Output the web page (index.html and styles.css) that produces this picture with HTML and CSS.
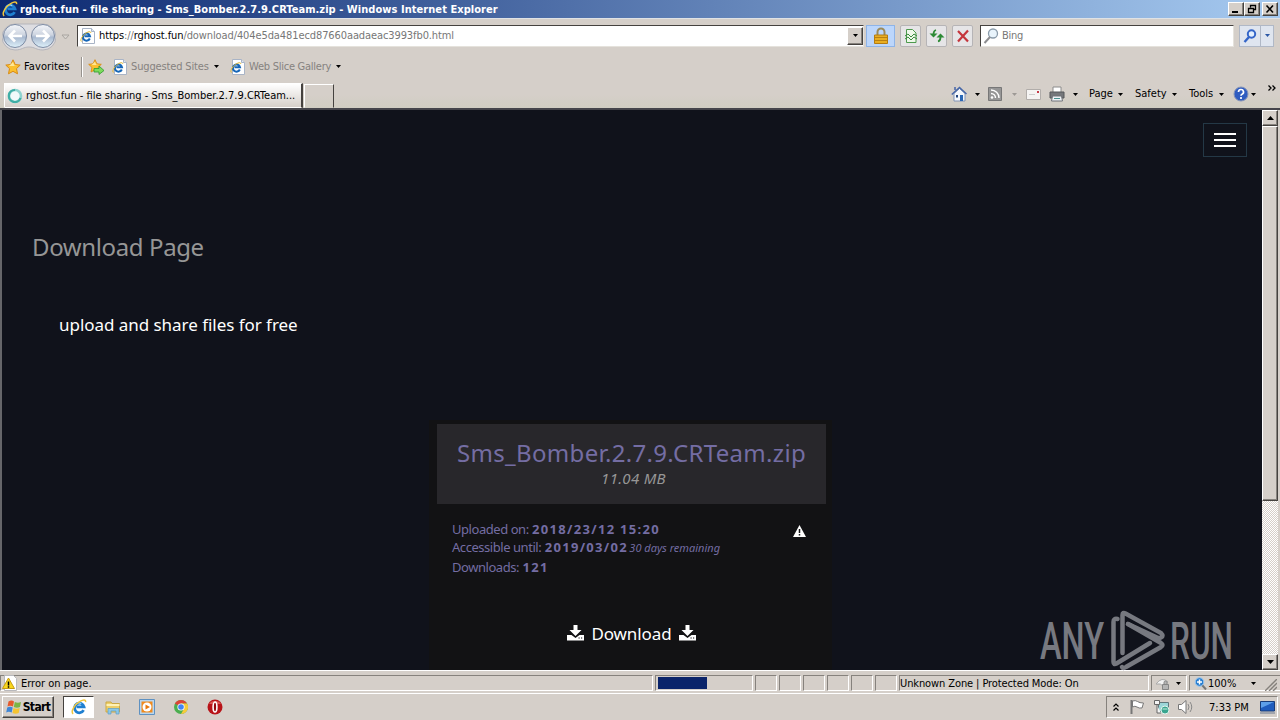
FILE: index.html
```
<!DOCTYPE html>
<html lang="en">
<head>
  <meta charset="UTF-8" />
  <title>rghost.fun - file sharing - Sms_Bomber.2.7.9.CRTeam.zip</title>
  <link rel="stylesheet" href="styles.css">
</head>
<body>

<!-- shared icons -->
<svg class="defs">
  <symbol id="ie" viewBox="0 0 16 16">
    <path d="M12.600 11.200A4.800 4.800 0 1 1 13 7.800H5.500" fill="none" stroke="#1f7fd0" stroke-width="2.800"/>
    <path d="M4.200 6.200a4 4 0 0 1 6-1.500" fill="none" stroke="#8fd6fa" stroke-width="1.200"/>
    <path d="M2.200 14.800C-1 13 4 5 9 2.400c3-1.800 6-2.200 5.600.8" fill="none" stroke="#f0c53c" stroke-width="1.500"/>
  </symbol>
  <symbol id="iepage" viewBox="0 0 16 16">
    <path d="M2.500.5h9l3 3v12h-12z" fill="#fff" stroke="#a9b4c6"/>
    <path d="M11.500.5v3h3" fill="#dde6f2" stroke="#a9b4c6"/>
    <path d="M9.800 10.500A3.600 3.600 0 1 1 10 8.300H4.500" fill="none" stroke="#1767b8" stroke-width="2"/>
    <path d="M1.400 13.500C-.5 12 3 6.500 7 4.500c2-1 4-1.300 3.700.5" fill="none" stroke="#e3b62c"/>
  </symbol>
  <symbol id="star" viewBox="0 0 16 16">
    <path d="M8 .8l2.200 4.700 5 .6-3.700 3.500 1 5.200L8 12.300l-4.500 2.500 1-5.200L.8 6.100l5-.6z" fill="#fbc02e" stroke="#d98a13"/>
    <path d="M8 3l1.300 3.400 3 .5H4z" fill="#ffe795"/>
  </symbol>
  <symbol id="arrow" viewBox="0 0 5 3"><path d="M0 0h5L2.500 3z" fill="currentColor"/></symbol>
  <symbol id="dl" viewBox="0 0 17 16">
    <path d="M6.500 0h4v5h4l-6 6-6-6h4z" fill="#fff"/>
    <path d="M0 10h4.500l4 3 4-3H17v5.500H0z" fill="#fff"/>
    <path d="M11.500 13h1.200M14 13h1.200" stroke="#121214" stroke-width="1.200"/>
  </symbol>
</svg>

<div class="titlebar">
  <svg class="i16"><use href="#ie"/></svg>
  <span class="title">rghost.fun - file sharing - Sms_Bomber.2.7.9.CRTeam.zip - Windows Internet Explorer</span>
  <div class="winbtns">
    <button><svg viewBox="0 0 12 10"><path d="M2 8h6" stroke="#000" stroke-width="2"/></svg></button>
    <button><svg viewBox="0 0 12 10"><path d="M4.500 3.500V1.500h5v4h-2M4 1.500h6M2.500 4.500h5v4h-5zM2 4.500h6" fill="none" stroke="#000" stroke-width="1.300"/></svg></button>
    <button class="close"><svg viewBox="0 0 12 10"><path d="M2.500 1.500l6.500 7M9 1.500l-6.500 7" stroke="#000" stroke-width="1.600"/></svg></button>
  </div>
</div>

<div class="addressbar">
  <svg class="nav" viewBox="0 0 54 28">
    <defs>
      <linearGradient id="ball" x1="0" y1="0" x2="0" y2="1">
        <stop offset="0" stop-color="#f4f6fa"/><stop offset=".45" stop-color="#cdd4e0"/><stop offset=".55" stop-color="#a9b9d0"/><stop offset="1" stop-color="#dff2fb"/>
      </linearGradient>
    </defs>
    <path d="M13 1h28a13 13 0 0 1 0 26c-7 0-8-3-14-3s-7 3-14 3a13 13 0 0 1 0-26z" fill="#dddde1" stroke="#b5b5bb"/>
    <circle cx="13" cy="13" r="11.500" fill="url(#ball)" stroke="#7d8ba3"/>
    <circle cx="41" cy="13" r="11.500" fill="url(#ball)" stroke="#7d8ba3"/>
    <path d="M20 13H8M13 7.500L7.500 13l5.500 5.500M34 13h12M41 7.500l5.500 5.500-5.500 5.500" fill="none" stroke="#fff" stroke-width="2.600"/>
  </svg>
  <svg class="navdrop" viewBox="0 0 9 6"><path d="M1 1h7L4.500 5z" fill="#d9d5d0" stroke="#a9a5a0"/></svg>
  <div class="url">
    <svg class="i16"><use href="#iepage"/></svg>
    <span class="urltext"><b>https</b>://<b>rghost.fun</b>/download/404e5da481ecd87660aadaeac3993fb0.html</span>
    <button class="combo"><svg class="arr"><use href="#arrow"/></svg></button>
  </div>
  <div class="lock">
    <svg viewBox="0 0 16 18"><path d="M4.500 9V5a3.500 3.500 0 0 1 7 0v4" fill="none" stroke="#9b8a5a" stroke-width="2"/><path d="M1.500 8h13v8.500h-13z" fill="#e9ae22" stroke="#b57c10"/><path d="M2 10.500h12M2 13.500h12" stroke="#b98010"/></svg>
  </div>
  <div class="tool"><svg viewBox="0 0 16 16"><path d="M3.500 1.500h6l3.500 3.500v9.500H3.500z" fill="#eef8ea" stroke="#4d9a4d"/><path d="M2 8l3-2 3 3 3-3 3 2M2 11l3-2 3 3 3-3 3 2" fill="none" stroke="#3a8a3f"/></svg></div>
  <div class="tool"><svg viewBox="0 0 16 16"><path d="M7 2C5 2.500 4.500 4 4.500 7M9 13.500c2-.5 2.500-2 2.500-4.500" fill="none" stroke="#2d8a35" stroke-width="1.800"/><path d="M.5 5.500h8L4.500 9.500zM7.500 9.500h8L11.500 5.500z" fill="#2d8a35"/></svg></div>
  <div class="tool"><svg viewBox="0 0 16 16"><path d="M3 3l10 10.500M13 2.500L3 13.500" stroke="#c5353c" stroke-width="2.200"/></svg></div>
  <div class="search">
    <svg viewBox="0 0 16 16"><circle cx="10" cy="5.500" r="4.500" fill="#e9f4fc" stroke="#8b9cab" stroke-width="1.300"/><path d="M7 9l-5.500 6" stroke="#8d8d90" stroke-width="2"/></svg>
    <span>Bing</span>
  </div>
  <div class="go"><svg viewBox="0 0 14 14"><circle cx="8.500" cy="5" r="3.700" fill="#e2efff" stroke="#3465c8" stroke-width="2"/><path d="M6 8l-4.500 5" stroke="#3465c8" stroke-width="2.400"/></svg></div>
  <div class="godrop"><svg class="arr"><use href="#arrow"/></svg></div>
</div>

<div class="favbar">
  <svg class="i16"><use href="#star"/></svg>
  <span class="fav">Favorites</span>
  <i class="divider"></i>
  <svg class="i16" viewBox="0 0 16 16"><use href="#star" width="14" height="14"/><path d="M6 9.500h5V7l5 4.500-5 4v-2.500H6z" fill="#7ddb5c" stroke="#2c9a2c" stroke-width=".8"/></svg>
  <svg class="i16 gap8"><use href="#iepage"/></svg>
  <span class="link sites">Suggested Sites</span><svg class="arr"><use href="#arrow"/></svg>
  <svg class="i16 gap11"><use href="#iepage"/></svg>
  <span class="link gallery">Web Slice Gallery</span><svg class="arr"><use href="#arrow"/></svg>
</div>

<div class="tabs">
  <div class="tab">
    <svg class="i16" viewBox="0 0 16 16"><circle cx="8" cy="8" r="6" fill="#f1fafa" stroke="#8fd3cf" stroke-width="2.600"/><path d="M8 2a6 6 0 1 0 5.500 8" fill="none" stroke="#3faea6" stroke-width="2.200"/></svg>
    <span>rghost.fun - file sharing - Sms_Bomber.2.7.9.CRTeam...</span>
  </div>
  <div class="newtab"></div>
  <div class="commands">
    <svg class="i16" viewBox="0 0 16 16"><path d="M3 7.500l5.500-5 5.500 5V15H3z" fill="#f5f8fc" stroke="#8294b5"/><path d="M.8 8.500L8.500 1.500l7 6.500M4 4V1" fill="none" stroke="#4566a8" stroke-width="1.500"/><path d="M9 9h3v6H9z" fill="#2a67b5"/><path d="M5 9h2v2.500H5z" fill="#20447d"/></svg>
    <svg class="arr c1"><use href="#arrow"/></svg>
    <svg class="rss" viewBox="0 0 14 14"><path d="M.5.5h13v13H.5z" fill="#969696" stroke="#777"/><circle cx="4" cy="10.500" r="1.300" fill="#fff"/><path d="M3 6.500a4.500 4.500 0 0 1 4.500 4.500M3 3a8 8 0 0 1 8 8" fill="none" stroke="#fff" stroke-width="1.400"/></svg>
    <svg class="arr c2 dim"><use href="#arrow"/></svg>
    <svg class="mail" viewBox="0 0 15 11"><path d="M.5.5h14v10H.5z" fill="#f5f4f3" stroke="#b1adaa"/><path d="M11 2h2v2h-2z" fill="#c53b48"/><path d="M3 5.500h6" stroke="#ccc"/></svg>
    <svg class="i16 c3" viewBox="0 0 16 16"><path d="M4 1h8v6H4z" fill="#fff" stroke="#8b8b8b"/><path d="M1 6h14v6H1z" fill="#75777b" stroke="#54565a"/><path d="M3.500 10h9l1 5h-11z" fill="#edf1f5" stroke="#707379"/><path d="M5 12.500h6" stroke="#4a8f8f"/></svg>
    <svg class="arr c4"><use href="#arrow"/></svg>
    <span class="page">Page</span><svg class="arr"><use href="#arrow"/></svg>
    <span class="safety">Safety</span><svg class="arr"><use href="#arrow"/></svg>
    <span class="tools">Tools</span><svg class="arr"><use href="#arrow"/></svg>
    <svg class="i16 help" viewBox="0 0 16 16"><circle cx="8" cy="8" r="7" fill="#2f5cc0" stroke="#8694b8"/><path d="M5.500 6a2.500 2.500 0 1 1 3.500 2.300q-1 .5-1 1.500M8 11v2" fill="none" stroke="#fff" stroke-width="1.700"/></svg>
    <svg class="arr c5"><use href="#arrow"/></svg>
    <svg class="more" viewBox="0 0 8 6"><path d="M.5.5L3 3 .5 5.500M4.500.5L7 3 4.500 5.500" fill="none" stroke="#000" stroke-width="1.300"/></svg>
  </div>
</div>

<div class="viewport">
  <main class="site">
    <button class="menu"><i></i><i></i><i></i></button>
    <h1>Download Page</h1>
    <p class="slogan">upload and share files for free</p>
    <div class="card">
      <div class="card-head">
        <h2>Sms_Bomber.2.7.9.CRTeam.zip</h2>
        <em>11.04 MB</em>
      </div>
      <div class="info">
        <div class="rows">
          <div><span class="lbl">Uploaded on:</span> <strong>2018/23/12 15:20</strong></div>
          <div><span class="lbl">Accessible until:</span> <strong>2019/03/02</strong> <em>30 days remaining</em></div>
          <div><span class="lbl">Downloads:</span> <strong>121</strong></div>
        </div>
        <svg class="warn" viewBox="0 0 13 12"><path d="M6.500 0L13 12H0z" fill="#fff"/><path d="M6.500 4v4M6.500 9v1.500" stroke="#121214" stroke-width="1.500"/></svg>
      </div>
      <div class="download">
        <svg><use href="#dl"/></svg><span>Download</span><svg><use href="#dl"/></svg>
      </div>
    </div>
    <svg class="watermark" viewBox="0 0 194 62">
      <text x="1" y="50" textLength="64" lengthAdjust="spacingAndGlyphs">ANY</text>
      <text x="131" y="50" textLength="63" lengthAdjust="spacingAndGlyphs">RUN</text>
      <path d="M78.500 10q-4-1-4 3v40q0 3 3 1.500L111 34"/>
      <path d="M83.500 44V6q0-3 3-1.500L122 24q3 3 0 4.500-2 1-4 0L89 15"/>
      <path d="M83 58q1 2 4 0l35-20q3-2 0-4L89 15"/>
    </svg>
  </main>
  <div class="scroll">
    <button><svg viewBox="0 0 7 4"><path d="M0 4h7L3.500 0z"/></svg></button>
    <div class="thumb"></div>
    <div class="track"></div>
    <button><svg viewBox="0 0 7 4"><path d="M0 0h7L3.500 4z"/></svg></button>
  </div>
</div>

<div class="statusbar">
  <div class="pane message">
    <svg class="i16" viewBox="0 0 16 16"><path d="M2.500.5h9l3 3v12h-12z" fill="#fff" stroke="#b9b9bd"/><path d="M6.500 3l6 10.500H.5z" fill="#f9d71c" stroke="#c69b10"/><path d="M6.500 6.500v4M6.500 11.200v1.500" stroke="#000" stroke-width="1.500"/></svg>
    <span>Error on page.</span>
  </div>
  <div class="pane progress"><i></i></div>
  <div class="pane small"></div>
  <div class="pane small"></div>
  <div class="pane small"></div>
  <div class="pane small"></div>
  <div class="pane small"></div>
  <div class="pane small"></div>
  <div class="pane zone"><span>Unknown Zone | Protected Mode: On</span></div>
  <div class="pane privacy">
    <svg class="i16" viewBox="0 0 16 16"><path d="M1 9q6-8 12-2-3 0-5 4-2-3-7-2z" fill="#f3f3f3" stroke="#aaa"/><path d="M7.500 9.500h6v5h-6zM9 9V7.500a1.500 1.500 0 0 1 3 0V9" fill="#b5b5b5" stroke="#858585"/></svg>
    <svg class="arr"><use href="#arrow"/></svg>
  </div>
  <div class="pane zoom">
    <svg class="mag" viewBox="0 0 13 13"><path d="M8 8l4 4.500" stroke="#777" stroke-width="2"/><circle cx="5.500" cy="5" r="4.300" fill="#2b7fd0" stroke="#9cc7ee"/><path d="M3 5h5M5.500 2.500v5" stroke="#fff" stroke-width="1.400"/></svg>
    <span>100%</span>
    <svg class="arr"><use href="#arrow"/></svg>
    <svg class="grip" viewBox="0 0 12 12"><path d="M0 12L12 0M4 12l8-8M8 12l4-4" stroke="#85817c" stroke-width="1.400"/></svg>
  </div>
</div>

<div class="taskbar">
  <button class="start">
    <svg viewBox="0 0 16 16"><path d="M2.500 2.500q3-2 5.500 0L7 7.500q-3-1.500-5.500 0z" fill="#e65a2c"/><path d="M8.800 3q3 1.500 6.200 0l-1 5q-3 1.500-6.200 0z" fill="#7cb544"/><path d="M1.200 8.500q3-1.500 5.500 0l-1 5q-3-1.500-5.500 0z" fill="#3f86d6"/><path d="M7.500 9q3 1.500 6.200 0l-1 5q-3 1.500-6.200 0z" fill="#f5c431"/></svg>
    <b>Start</b>
  </button>
  <div class="task active"><svg class="i16"><use href="#ie"/></svg></div>
  <svg class="i16 quick" viewBox="0 0 16 16"><path d="M1 3h5l1 1.500h7.500V13H1z" fill="#edcf6a" stroke="#cba845"/><path d="M1.500 6h13" stroke="#fff1b5" stroke-width="2"/><path d="M3 15V9.500h11V15h-3v-3H6v3z" fill="#8bc8e8" stroke="#5e9fc5" stroke-width=".7"/></svg>
  <svg class="i16 quick" viewBox="0 0 16 16"><path d="M.5.5h15v15H.5z" fill="#b9d6ee" stroke="#5e91c1"/><path d="M2.500 2.500h11v11h-11z" fill="#f08a1d"/><circle cx="8" cy="8" r="4.500" fill="#fff"/><path d="M6.500 5.500l4.500 2.500-4.500 2.500z" fill="#e8780c"/></svg>
  <svg class="i16 quick" viewBox="0 0 16 16"><circle cx="8" cy="8" r="7" fill="#4bae4f"/><path d="M8 8L1.900 4.500A7 7 0 0 1 14.100 4.500H8z" fill="#dc4437"/><path d="M8 4.500h6.100A7 7 0 0 1 8 15l3-5.300z" fill="#f7cb3a"/><circle cx="8" cy="8" r="3.600" fill="#fff"/><circle cx="8" cy="8" r="2.800" fill="#4285f4"/></svg>
  <svg class="i16 quick" viewBox="0 0 16 16"><circle cx="8" cy="8" r="7.500" fill="#b81318"/><path d="M2 5a6.500 5 0 0 1 12 0" fill="#dc5754"/><ellipse cx="8" cy="8" rx="1.900" ry="5" fill="#93080d" stroke="#fff" stroke-width="1.600"/></svg>
  <div class="tray">
    <svg class="chev" viewBox="0 0 6 8"><path d="M.5 3.500L3 1l2.500 2.500M.5 7.500L3 5l2.500 2.500" fill="none" stroke="#000" stroke-width="1.200"/></svg>
    <svg class="i16 flag" viewBox="0 0 16 16"><path d="M2.500 1v14" stroke="#777" stroke-width="2"/><path d="M3.500 2q3-1 5 .5t6 1.500l-1.500 5q-3 .5-5-1t-4.500 0z" fill="#fff" stroke="#777"/></svg>
    <svg class="i16 net" viewBox="0 0 16 16"><path d="M4.500 3.500h10v9h-10z" fill="#9bd6d8" stroke="#60777b"/><path d="M.5 1.500h5v4h-5zM3 6v8h4" fill="#f4f4f4" stroke="#666"/><circle cx="11" cy="11" r="4" fill="#39a58f" stroke="#e2f3ed"/><path d="M8.500 10h5" stroke="#c8efdf"/></svg>
    <svg class="i16 vol" viewBox="0 0 16 16"><path d="M.5 5.500h3L8 1.500v13l-4.500-4h-3z" fill="#fff" stroke="#777"/><path d="M10 5q2 3 0 6M12 3q3.500 5 0 10" fill="none" stroke="#888"/></svg>
    <span class="clock">7:33 PM</span>
    <svg class="desk" viewBox="0 0 15 13"><path d="M.5.5h14v9.500H.5z" fill="#1f5cbd" stroke="#183c79"/><path d="M1 1h13L1 7z" fill="#5d9fe9"/><path d="M0 12h15" stroke="#6c7b90"/></svg>
  </div>
</div>

</body>
</html>
```
FILE: styles.css
```
* {
  box-sizing: border-box;
}

body {
  margin: 0;
  width: 1280px;
  height: 720px;
  overflow: hidden;
  display: flex;
  flex-direction: column;
  background: #d5cfc9;
  color: #000;
  font-family: "DejaVu Sans Condensed", "DejaVu Sans", sans-serif;
  font-stretch: condensed;
  font-size: 11px;
  line-height: 14px;
  white-space: nowrap;
}

button {
  padding: 0;
  font: inherit;
  color: inherit;
  background: #d5cfc9;
  border: 1px solid;
  border-color: #fff #45423f #45423f #fff;
  box-shadow: inset -1px -1px #86827d;
  display: flex;
  align-items: center;
  justify-content: center;
}

svg {
  flex: none;
}

.defs {
  position: absolute;
  width: 0;
  height: 0;
}

.i16 {
  width: 16px;
  height: 16px;
}

.arr {
  width: 5px;
  height: 3px;
}

/* title bar */
.titlebar {
  height: 18px;
  flex: none;
  display: flex;
  align-items: center;
  padding: 0 2px;
  background: linear-gradient(90deg, #0b2870, #a6caf0);
}

.title {
  margin: 1px 0 0 2px;
  color: #fff;
  font-weight: bold;
  letter-spacing: 0.05px;
}

.winbtns {
  display: flex;
  margin-left: auto;
}

.winbtns button {
  width: 16px;
  height: 14px;
}

.winbtns svg {
  width: 12px;
  height: 10px;
}

.winbtns .close {
  margin-left: 2px;
}

/* address bar */
.addressbar {
  height: 36px;
  flex: none;
  display: flex;
  align-items: center;
  padding-left: 2px;
  border-top: 1px solid #dfe2e5;
}

.nav {
  width: 54px;
  height: 28px;
}

.navdrop {
  width: 9px;
  height: 6px;
  margin: 0 11px 0 5px;
}

.url {
  width: 787px;
  height: 22px;
  margin-left: -4px;
  margin-top: -2px;
  display: flex;
  align-items: center;
  padding-left: 2px;
  background: #fff;
  border: 1px solid;
  border-color: #45423f #e5e2dc #e5e2dc #45423f;
}

.urltext {
  margin: 1px 0 0 3px;
  color: #777;
  letter-spacing: -0.1px;
}

.urltext b {
  color: #000;
  font-weight: normal;
}

.combo {
  width: 16px;
  height: 18px;
  margin-left: auto;
}

.lock {
  width: 29px;
  height: 22px;
  margin: -2px 5px 0 2px;
  display: flex;
  align-items: center;
  justify-content: center;
  background: #bcd6fb;
  border: 1px solid #8eb4e8;
}

.lock svg {
  width: 16px;
  height: 18px;
}

.tool {
  width: 21px;
  height: 22px;
  margin: -2px 5px 0 0;
  display: flex;
  align-items: center;
  justify-content: center;
  background: #e6e5e7;
  border: 1px solid #b6b4b6;
  border-radius: 2px;
}

.tool svg {
  width: 16px;
  height: 16px;
}

.search {
  width: 254px;
  height: 22px;
  margin: -2px 5px 0 2px;
  padding-left: 2px;
  display: flex;
  align-items: center;
  background: #fff;
  border: 1px solid;
  border-color: #45423f #e5e2dc #e5e2dc #45423f;
  color: #777;
}

.search svg {
  width: 16px;
  height: 16px;
}

.search span {
  margin: 1px 0 0 3px;
  letter-spacing: -0.3px;
}

.go,
.godrop {
  height: 22px;
  margin-top: -2px;
  display: flex;
  align-items: center;
  justify-content: center;
  background: #dfe5ef;
  border: 1px solid #b0b8c6;
  color: #2b57a5;
}

.go {
  width: 22px;
}

.go svg {
  width: 14px;
  height: 14px;
}

.godrop {
  width: 13px;
  border-left: 0;
}

/* favorites bar */
.favbar {
  height: 27px;
  flex: none;
  display: flex;
  align-items: center;
  padding: 0 0 2px 5px;
}

.fav {
  width: 46px;
  margin-left: 3px;
  letter-spacing: 0.1px;
}

.divider {
  width: 2px;
  height: 20px;
  margin: 0 5px 0 11px;
  border-left: 1px solid #96928d;
  border-right: 1px solid #fff;
}

.gap8 {
  margin-left: 8px;
}

.gap11 {
  margin-left: 11px;
}

.link {
  margin-left: 3px;
  color: #85827f;
}

.sites {
  width: 83px;
  letter-spacing: -0.15px;
}

.gallery {
  width: 87px;
  letter-spacing: -0.25px;
}

/* tabs */
.tabs {
  height: 29px;
  flex: none;
  display: flex;
  padding-left: 4px;
  border-bottom: 2px solid #45454b;
  background: linear-gradient(#d5cfc9 50%, #d0cdc2);
}

.tab {
  width: 299px;
  height: 25px;
  margin-top: 2px;
  padding: 1px 0 0 2px;
  display: flex;
  align-items: center;
  background: linear-gradient(#fff, #d5cfc9);
  border: 1px solid;
  border-color: #fff #45423f transparent #fff;
  border-right-width: 2px;
}

.tab span {
  margin-left: 3px;
}

.newtab {
  width: 30px;
  height: 24px;
  margin: 3px 0 0 1px;
  border: 1px solid;
  border-color: #fff #45423f transparent #fff;
}

.commands {
  display: flex;
  align-items: center;
  margin-left: auto;
  padding: 0 4px 1px 0;
}

.c1 {
  margin: 0 8px;
}

.rss {
  width: 14px;
  height: 14px;
}

.dim {
  color: #9d9995;
}

.c2 {
  margin: 0 9px 0 10px;
}

.mail {
  width: 15px;
  height: 11px;
}

.c3 {
  margin-left: 8px;
}

.c4 {
  margin: 0 11px 0 8px;
}

.page {
  width: 29px;
}

.safety {
  width: 37px;
  margin-left: 12px;
}

.tools {
  width: 30px;
  margin-left: 12px;
}

.help {
  margin-left: 9px;
}

.c5 {
  margin-left: 2px;
}

.more {
  width: 8px;
  height: 6px;
  margin: -13px 0 0 12px;
}

/* page */
.viewport {
  height: 560px;
  flex: none;
  display: flex;
  border-left: 2px solid #66666a;
}

.site {
  position: relative;
  width: 1260px;
  padding-top: 119px;
  background: #10121b;
  font-family: "Noto Sans", sans-serif;
  font-stretch: normal;
}

.menu {
  position: absolute;
  top: 13px;
  right: 15px;
  width: 44px;
  height: 34px;
  flex-direction: column;
  gap: 4px;
  background: none;
  border: 1px solid #243846;
  box-shadow: none;
}

.menu i {
  width: 22px;
  height: 2px;
  background: #fff;
}

h1 {
  margin: 0 0 0 30px;
  color: #969696;
  font-size: 24px;
  font-weight: normal;
  line-height: 36px;
  letter-spacing: -0.38px;
}

.slogan {
  margin: 48px 0 0 57px;
  color: #fff;
  font-size: 17px;
  line-height: 24px;
  letter-spacing: -0.04px;
}

.card {
  width: 403px;
  height: 250px;
  margin: 83px 0 0 427px;
  padding: 4px 7px 0 8px;
  background: #121214;
}

.card-head {
  height: 80px;
  margin-right: -1px;
  padding-top: 14px;
  text-align: center;
  background: #28272b;
}

h2 {
  margin: 0;
  color: #746da3;
  font-size: 24px;
  font-weight: normal;
  line-height: 30px;
  letter-spacing: 0.33px;
}

.card-head em {
  display: block;
  padding-left: 4px;
  color: #969696;
  font-size: 15px;
  line-height: 20px;
  letter-spacing: 0.3px;
}

.info {
  display: flex;
  justify-content: space-between;
  padding: 17px 19px 0 15px;
}

.rows {
  margin-top: -1px;
  color: #746da3;
  font-size: 13px;
  line-height: 18.4px;
}

.lbl {
  letter-spacing: -0.45px;
}

.rows strong {
  letter-spacing: 1.3px;
}

.rows em {
  margin-left: -2px;
  font-size: 11px;
}

.warn {
  width: 13px;
  height: 12px;
  margin-top: 4px;
}

.download {
  margin: 45px 0 0 1px;
  display: flex;
  justify-content: center;
  align-items: center;
  color: #fff;
  font-size: 17px;
  line-height: 26px;
  letter-spacing: -0.1px;
}

.download svg {
  width: 17px;
  height: 16px;
  margin: -2px 7px 0;
}

.watermark {
  position: absolute;
  left: 1037px;
  top: 499px;
  width: 194px;
  height: 62px;
  overflow: visible;
}

.watermark text {
  font-family: Roboto, sans-serif;
  font-size: 52px;
  font-weight: 500;
  fill: #777980;
}

.watermark path {
  fill: none;
  stroke: #777980;
  stroke-width: 4.5;
  stroke-linecap: round;
}

.scroll {
  width: 16px;
  display: flex;
  flex-direction: column;
  background: #e9e6e2;
}

.scroll button {
  height: 16px;
  flex: none;
}

.scroll button svg {
  width: 7px;
  height: 4px;
}

.thumb {
  height: 375px;
  background: #d5cfc9;
  border: 1px solid;
  border-color: #fff #45423f #45423f #fff;
  box-shadow: inset -1px -1px #86827d;
}

.track {
  flex: 1;
  background: repeating-conic-gradient(#fff 0 25%, #d5cfc9 0 50%) 0 0 / 2px 2px;
}

/* status bar */
.statusbar {
  height: 24px;
  flex: none;
  display: flex;
  gap: 2px;
  padding: 4px 0 2px;
  border-top: 1px solid #fff;
  border-bottom: 1px solid #fff;
}

.pane {
  display: flex;
  align-items: center;
  border: 1px solid;
  border-color: #86827d #fff #fff #86827d;
}

.pane span {
  margin-top: 1px;
}

.message {
  width: 653px;
  padding-left: 1px;
}

.message span {
  margin-left: 3px;
}

.progress {
  width: 98px;
  padding-left: 2px;
}

.progress i {
  width: 49px;
  height: 12px;
  background: #0a246a;
}

.small {
  width: 22px;
}

.zone {
  width: 250px;
  letter-spacing: -0.1px;
}

.privacy {
  width: 36px;
  padding-left: 3px;
}

.privacy .arr {
  margin-left: 5px;
}

.zoom {
  width: 91px;
  padding-left: 4px;
  border-right: 0;
}

.mag {
  width: 13px;
  height: 13px;
}

.zoom span {
  width: 30px;
  margin: 1px 13px 0 1px;
}

.grip {
  width: 12px;
  height: 12px;
  margin: 4px 0 0 9px;
}

/* taskbar */
.taskbar {
  flex: 1;
  display: flex;
  align-items: center;
  padding-left: 2px;
}

.start {
  width: 52px;
  height: 22px;
  gap: 1px;
}

.start svg {
  width: 16px;
  height: 16px;
}

.start b {
  font-size: 12px;
  letter-spacing: -0.6px;
}

.task {
  width: 31px;
  height: 22px;
  margin: 0 -7px 0 9px;
  display: flex;
  align-items: center;
  justify-content: center;
  background: #fff;
  border: 1px solid;
  border-color: #45423f #fff #fff #45423f;
}

.quick {
  margin-left: 18px;
}

.tray {
  width: 172px;
  height: 22px;
  margin: 0 2px 0 auto;
  padding-left: 6px;
  display: flex;
  align-items: center;
  border: 1px solid;
  border-color: #86827d #fff #fff #86827d;
}

.chev {
  width: 6px;
  height: 8px;
}

.flag {
  margin-left: 10px;
}

.net {
  margin-left: 9px;
}

.vol {
  margin-left: 8px;
}

.clock {
  width: 40px;
  margin: 1px 0 0 15px;
}

.desk {
  width: 15px;
  height: 13px;
  margin-left: 11px;
}
```
